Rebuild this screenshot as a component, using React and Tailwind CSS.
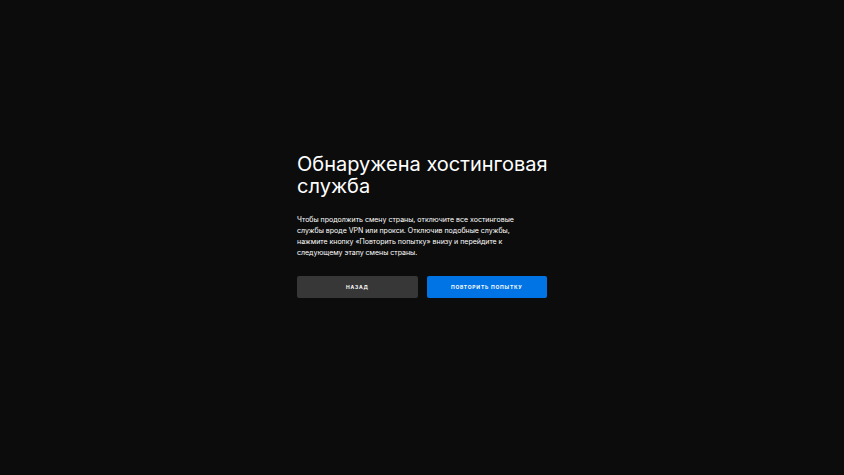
import React from "react";

const buttonClass =
  "h-[22px] flex-1 rounded-[2px] text-[5px] leading-none font-bold uppercase text-white tracking-[0.15em]";

function Actions({ onBack, onRetry }) {
  return (
    <div className="mt-[18px] flex gap-[9px]">
      <button
        type="button"
        onClick={onBack}
        className={`${buttonClass} bg-[#373737] hover:bg-[#444444]`}
      >
        Назад
      </button>
      <button
        type="button"
        onClick={onRetry}
        className={`${buttonClass} bg-[#0074e4] hover:bg-[#1a85ee]`}
      >
        Повторить попытку
      </button>
    </div>
  );
}

function App() {
  const handleBack = () => window.history.back();
  const handleRetry = () => window.location.reload();

  return (
    <main className="flex min-h-screen items-center justify-center bg-[#0c0c0c] font-['Inter','Liberation_Sans',sans-serif] text-white">
      <section className="w-full max-w-[250px] mb-6">
        <h1 className="-mr-2 text-[20px] leading-[22px]">
          Обнаружена хостинговая служба
        </h1>
        <p className="mt-[17px] pr-5 text-[7px] leading-[11px]">
          Чтобы продолжить смену страны, отключите все хостинговые службы вроде
          VPN или прокси. Отключив подобные службы, нажмите кнопку «Повторить
          попытку» внизу и перейдите к следующему этапу смены страны.
        </p>
        <Actions onBack={handleBack} onRetry={handleRetry} />
      </section>
    </main>
  );
}

export default App;
